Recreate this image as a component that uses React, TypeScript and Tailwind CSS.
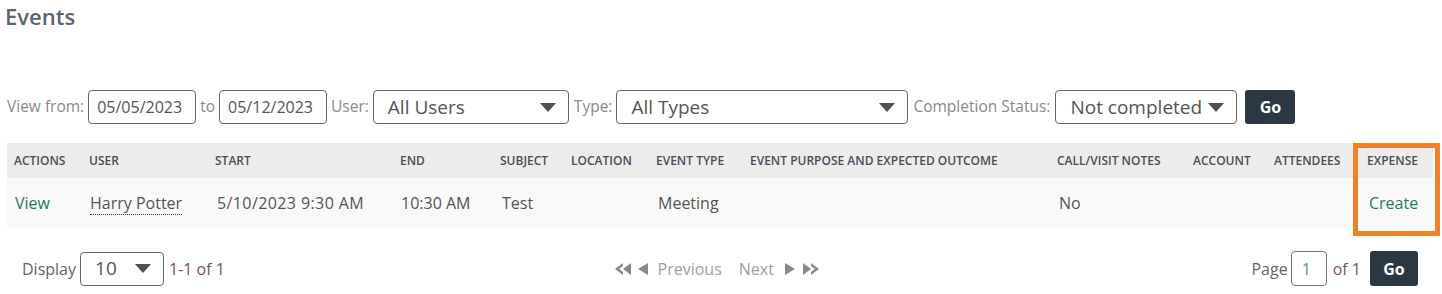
import React from "react";

const Caret = () => (
  <svg width="16" height="9" viewBox="0 0 16 9" className="shrink-0">
    <path d="M0 0 H16 L8 9 Z" fill="#505050" />
  </svg>
);

const Select = ({ value, w }: { value: string; w: string }) => (
  <div className={`${w} h-[34px] border border-[#666] rounded-[4px] bg-white flex items-center justify-between pl-[14px] pr-[12px] text-[19px] text-[#555]`}>
    <span>{value}</span>
    <Caret />
  </div>
);

const DateBox = ({ value }: { value: string }) => (
  <div className="w-[108px] h-[34px] border border-[#666] rounded-[4px] bg-white flex items-center pl-[8px] text-[16px] text-[#555]">
    {value}
  </div>
);

const cols = [75, 126, 185, 100, 71, 85, 94, 307, 136, 81, 93, 73];
const heads = ["Actions", "User", "Start", "End", "Subject", "Location", "Event Type", "Event Purpose and Expected Outcome", "Call/Visit Notes", "Account", "Attendees", "Expense"];

export default function App() {
  return (
    <div className="relative w-[1442px] h-[294px] bg-white font-['Open_Sans',sans-serif] text-[#555]">
      <h1 className="pl-[5px] pt-[1px] text-[22px] font-semibold text-[#5b6670] leading-[31px]">Events</h1>

      <div className="flex items-center mt-[58px] pl-[7px] text-[15.5px] text-[#8a8a8a]">
        <span className="mr-[4px]">View from:</span>
        <DateBox value="05/05/2023" />
        <span className="ml-[4px] mr-[4px]">to</span>
        <DateBox value="05/12/2023" />
        <span className="ml-[4px] mr-[4px]">User:</span>
        <Select value="All Users" w="w-[196px]" />
        <span className="ml-[5px] mr-[4px]">Type:</span>
        <Select value="All Types" w="w-[292px]" />
        <span className="ml-[5px] mr-[5px]">Completion Status:</span>
        <Select value="Not completed" w="w-[182px]" />
        <button className="ml-[8px] w-[50px] h-[34px] rounded-[3px] bg-[#2b3843] text-white font-bold text-[16px]">Go</button>
      </div>

      <table className="ml-[7px] mt-[19px] table-fixed border-collapse w-[1426px]">
        <colgroup>
          {cols.map((c, i) => (
            <col key={i} style={{ width: c }} />
          ))}
        </colgroup>
        <thead>
          <tr className="h-[35px] bg-[#ececec]">
            {heads.map((h) => (
              <th key={h} className="text-left font-semibold uppercase text-[12px] text-[#4d4d58] pl-[7px] whitespace-nowrap">{h}</th>
            ))}
          </tr>
        </thead>
        <tbody>
          <tr className="h-[50px] bg-[#f9f9f9] text-[16px] text-[#555]">
            <td className="pl-[8px] text-[#1f7a5c]">View</td>
            <td className="pl-[8px]">
              <span className="border-b border-dotted border-[#444]">Harry Potter</span>
            </td>
            <td className="pl-[9px] tracking-[0.4px]">5/10/2023 9:30 AM</td>
            <td className="pl-[8px]">10:30 AM</td>
            <td className="pl-[9px]">Test</td>
            <td></td>
            <td className="pl-[9px]">Meeting</td>
            <td></td>
            <td className="pl-[9px]">No</td>
            <td></td>
            <td></td>
            <td className="pl-[9px] text-[#1f7a5c]">Create</td>
          </tr>
        </tbody>
      </table>

      <div className="flex items-center justify-between mt-[23px] pl-[22px] pr-[24px] text-[16px]">
        <div className="flex items-center w-[300px]">
          <span className="text-[#666] mr-[4px]">Display</span>
          <Select value="10" w="w-[84px]" />
          <span className="ml-[5px] text-[#7a5060]">1-1 of 1</span>
        </div>
        <div className="flex items-center text-[16px] text-[#9aa0a8] -ml-[140px]">
          <svg width="18" height="12" viewBox="0 0 18 12" className="mr-[5px]">
            <path d="M8 0 L0 6 L8 12 L8 9 L4 6 L8 3 Z M16 0 L8 6 L16 12 Z" fill="#888" />
          </svg>
          <svg width="10" height="12" viewBox="0 0 10 12" className="mr-[10px]">
            <path d="M10 0 L0 6 L10 12 Z" fill="#888" />
          </svg>
          <span>Previous</span>
          <span className="ml-[17px]">Next</span>
          <svg width="10" height="12" viewBox="0 0 10 12" className="ml-[11px]">
            <path d="M0 0 L10 6 L0 12 Z" fill="#888" />
          </svg>
          <svg width="18" height="12" viewBox="0 0 18 12" className="ml-[6px]">
            <path d="M2 0 L10 6 L2 12 Z M10 0 L18 6 L10 12 L10 9 L14 6 L10 3 Z" fill="#888" />
          </svg>
        </div>
        <div className="flex items-center">
          <span className="text-[#666] mr-[3px]">Page</span>
          <div className="w-[36px] h-[35px] border border-[#777] rounded-[4px] bg-white flex items-center pl-[10px] text-[#5a8ac0]">1</div>
          <span className="ml-[6px] mr-[9px] text-[#7a5060]">of 1</span>
          <button className="w-[48px] h-[35px] rounded-[3px] bg-[#2b3843] text-white font-bold text-[16px]">Go</button>
        </div>
      </div>

      <div className="absolute left-[1353px] top-[143px] w-[87px] h-[93px] border-[5px] border-[#f0802a] pointer-events-none" />
    </div>
  );
}
